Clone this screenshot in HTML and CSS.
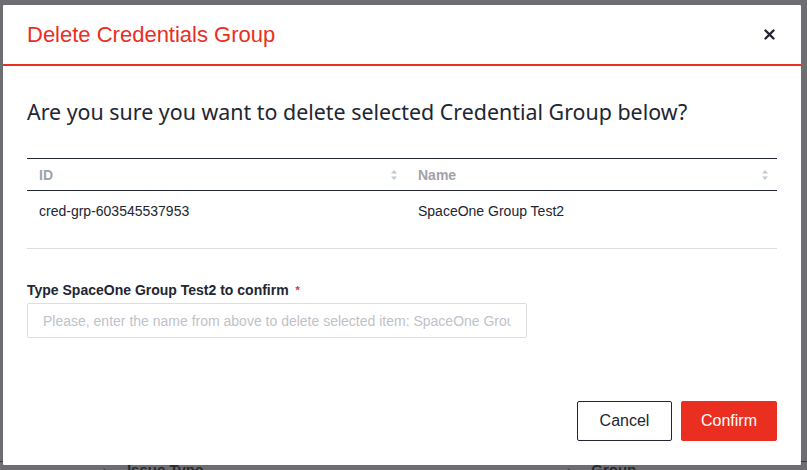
FILE: index.html
```html
<!DOCTYPE html>
<html>
<head>
<meta charset="utf-8">
<link rel="stylesheet" href="styles.css">
</head>
<body>
<div class="page">
  <div class="bg-row">
    <span class="bg-cell"><span class="bg-tri">▲</span>Issue Type</span>
    <span class="bg-cell bg-cell2"><span class="bg-tri">▲</span>Group</span>
  </div>
</div>
<div class="modal">
  <div class="modal-header">
    <h2 class="modal-title">Delete Credentials Group</h2>
    <button class="close-btn" aria-label="close">
      <svg width="11" height="11" viewBox="0 0 11 11"><path d="M1.5 1.5 L9.5 9.5 M9.5 1.5 L1.5 9.5" stroke="#222532" stroke-width="2.4" stroke-linecap="round"/></svg>
    </button>
  </div>
  <div class="modal-body">
    <p class="question">Are you sure you want to delete selected Credential Group below?</p>
    <table class="data-table">
      <thead>
        <tr>
          <th class="col-id"><div class="th-inner"><span>ID</span><svg class="sort" width="8" height="12" viewBox="0 0 8 12"><path d="M4 1 L7 4.5 H1 Z M4 11 L7 7.5 H1 Z" fill="#c6c8cf"/></svg></div></th>
          <th><div class="th-inner"><span>Name</span><svg class="sort" width="8" height="12" viewBox="0 0 8 12"><path d="M4 1 L7 4.5 H1 Z M4 11 L7 7.5 H1 Z" fill="#c6c8cf"/></svg></div></th>
        </tr>
      </thead>
      <tbody>
        <tr>
          <td>cred-grp-603545537953</td>
          <td>SpaceOne Group Test2</td>
        </tr>
      </tbody>
    </table>
    <div class="field">
      <label class="field-label">Type SpaceOne Group Test2 to confirm <span class="req">*</span></label>
      <input class="text-input" type="text" placeholder="Please, enter the name from above to delete selected item: SpaceOne Group Test2">
    </div>
  </div>
  <div class="modal-footer">
    <button class="btn btn-cancel">Cancel</button>
    <button class="btn btn-confirm">Confirm</button>
  </div>
</div>
</body>
</html>
```
FILE: styles.css
```css
html, body {
  margin: 0;
  padding: 0;
}
body {
  width: 807px;
  height: 470px;
  overflow: hidden;
  background: #6e6e72;
  font-family: "Liberation Sans", Arial, sans-serif;
  position: relative;
}
.page {
  height: 470px;
  display: flex;
  flex-direction: column;
  justify-content: flex-end;
}
.bg-row {
  height: 8px;
  display: flex;
  overflow: hidden;
  font-size: 15px;
  font-weight: bold;
  color: #2a2a30;
  border-top: 1px solid #3a3a3f;
}
.bg-cell {
  padding-left: 100px;
  line-height: 16px;
  display: flex;
  gap: 18px;
}
.bg-cell2 {
  padding-left: 361px;
}
.bg-tri {
  font-size: 9px;
  color: #4a4a50;
}
.modal {
  position: absolute;
  left: 3px;
  top: 5px;
  width: 798px;
  height: 460px;
  background: #fff;
  display: flex;
  flex-direction: column;
  border-radius: 1px;
}
.modal-header {
  height: 61px;
  box-sizing: border-box;
  padding: 1px 24px 0 24px;
  border-bottom: 2px solid #ea2e1f;
  display: flex;
  align-items: center;
  justify-content: space-between;
}
.modal-title {
  margin: 0;
  font-weight: normal;
  font-size: 22px;
  color: #ea2e1f;
  font-family: "Liberation Sans", Arial, sans-serif;
}
.close-btn {
  border: none;
  background: none;
  padding: 0;
  width: 11px;
  height: 11px;
  display: flex;
  margin-right: 2px;
  margin-top: -2px;
}
.modal-body {
  padding: 0 24px;
  flex: 1;
}
.question {
  margin: 30px 0 0 0;
  font-family: "Noto Sans", sans-serif;
  font-size: 21.4px;
  line-height: 32px;
  color: #222532;
}
.data-table {
  margin-top: 30px;
  width: 750px;
  border-collapse: collapse;
  font-size: 14px;
  table-layout: fixed;
}
.col-id {
  width: 379px;
}
.data-table th {
  text-align: left;
  font-weight: bold;
  color: #a0a2a9;
  height: 32px;
  border-top: 1px solid #222532;
  border-bottom: 1px solid #222532;
  padding: 0 0 0 12px;
  box-sizing: border-box;
}
.th-inner {
  display: flex;
  align-items: center;
  justify-content: space-between;
  padding-right: 8px;
}
.sort {
  display: block;
}
.data-table td {
  height: 58px;
  vertical-align: top;
  padding: 12px 0 0 12px;
  box-sizing: border-box;
  color: #222532;
  border-bottom: 1px solid #dcdde2;
}
.field {
  margin-top: 33px;
  display: flex;
  flex-direction: column;
}
.field-label {
  font-size: 14px;
  font-weight: bold;
  color: #222532;
  line-height: 16px;
}
.req {
  color: #ea2e1f;
  font-size: 11px;
  vertical-align: top;
  margin-left: 3px;
}
.text-input {
  margin-top: 5px;
  width: 500px;
  height: 35px;
  box-sizing: border-box;
  border: 1px solid #dcdde2;
  border-radius: 2px;
  padding: 0 15px;
  font-family: "Liberation Sans", Arial, sans-serif;
  font-size: 14px;
  color: #222532;
  outline: none;
}
.text-input::placeholder {
  color: #c0c2c9;
}
.modal-footer {
  display: flex;
  justify-content: flex-end;
  gap: 9px;
  padding: 0 24px 24px 0;
}
.btn {
  height: 40px;
  font-family: "Liberation Sans", Arial, sans-serif;
  font-size: 16px;
  border-radius: 2px;
  cursor: pointer;
}
.btn-cancel {
  width: 95px;
  background: #fff;
  border: 1px solid #222532;
  color: #222532;
}
.btn-confirm {
  width: 96px;
  background: #ea2e1f;
  border: 1px solid #ea2e1f;
  color: #fff;
}
```
